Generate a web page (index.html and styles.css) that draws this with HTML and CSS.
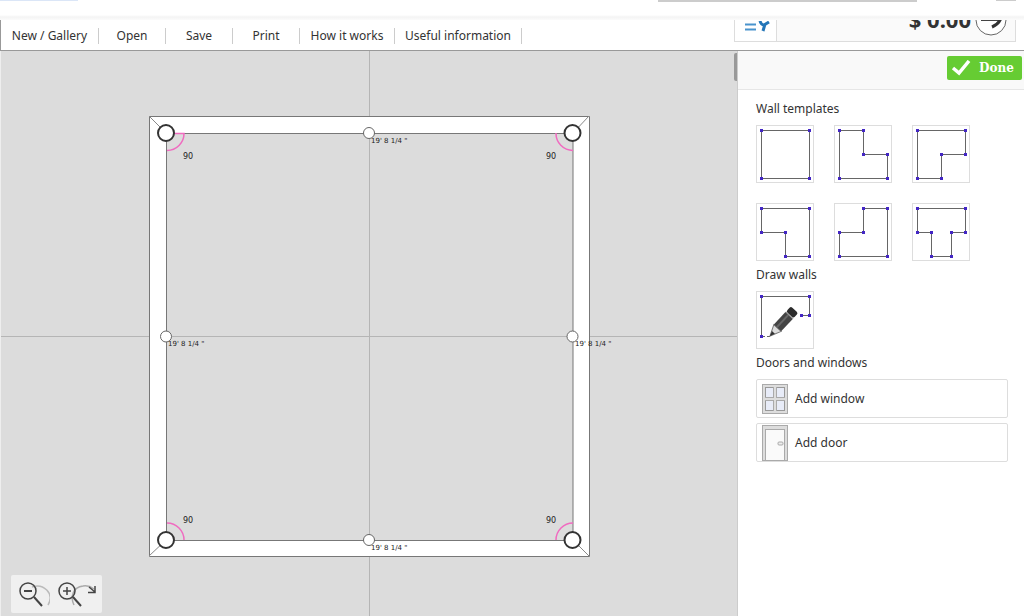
FILE: index.html
```html
<!DOCTYPE html>
<html lang="en">
<head>
<meta charset="utf-8">
<meta name="viewport" content="width=device-width, initial-scale=1">
<title>Room planner</title>
<link rel="stylesheet" href="styles.css">
</head>
<body>
<div class="top-strip"><span class="strip-tab"></span><span class="strip-line"></span><span class="strip-end"></span></div>
<header class="toolbar">
  <nav class="menu">
    <button class="menu-item wide">New / Gallery</button>
    <button class="menu-item">Open</button>
    <button class="menu-item">Save</button>
    <button class="menu-item">Print</button>
    <button class="menu-item how">How it works</button>
    <button class="menu-item info">Useful information</button>
  </nav>
  <div class="cart">
    <button class="cart-list" aria-label="Item list">
      <svg width="41" height="20" viewBox="0 0 41 20"><path d="M10 3.500H21M10 8.500H21" stroke="#4a94cd" stroke-width="2"/><path d="M25 0Q26 4 29 4L34 1M30 3L28 10" fill="none" stroke="#2476b8" stroke-width="3"/></svg>
    </button>
    <div class="price"><span>$ 0.00</span></div>
    <button class="cart-go" aria-label="Continue">
      <svg width="32" height="20" viewBox="0 0 32 20"><circle cx="16" cy="0" r="15" fill="#fff" stroke="#666"/><path d="M6 .5H25" stroke="#444"/><path d="M26-2Q24 4 17 7" fill="none" stroke="#333" stroke-width="3"/></svg>
    </button>
  </div>
</header>
<main class="workspace">
  <section class="canvas">
    <svg class="plan" width="440" height="440" viewBox="0 0 440 440">
      <path d="M220.5-400V840M-400 220.5H840" stroke="#b5b5b5"/>
      <path d="M.5.5H440.5V440.5H.5Z" fill="#fff" stroke="#777"/>
      <path d="M17.5 17.500H424V424.500H17.5Z" fill="#dcdcdc" stroke="#777"/>
      <path d="M220.500 18V424M18 220.500H424" stroke="#b5b5b5"/>
      <path d="M0 0L17 17M440 0L424 17M0 440L17 424M440 440L424 424" stroke="#888"/>
      <path d="M17 17.500H35A17 17 0 0 1 18 34.500M407 17A17 17 0 0 0 424 34.500M18 407A17 17 0 0 1 35 424M424 407A17 17 0 0 0 407 424" fill="none" stroke="#f06bc0" stroke-width="1.500"/>
      <g fill="#fff" stroke="#333" stroke-width="2"><circle cx="17" cy="17" r="8"/><circle cx="423.500" cy="17" r="8"/><circle cx="17" cy="424" r="8"/><circle cx="423.500" cy="424" r="8"/></g>
      <g fill="#fff" stroke="#666"><circle cx="220" cy="17" r="5.500"/><circle cx="17" cy="220.500" r="5.500"/><circle cx="423.500" cy="220.500" r="5.500"/><circle cx="220" cy="424" r="5.500"/></g>
      <g class="angle"><text x="34" y="43">90</text><text x="397" y="43">90</text><text x="34" y="407">90</text><text x="397" y="407">90</text></g>
      <g class="measure"><text x="222" y="27">19' 8 1/4 "</text><text x="19" y="230">19' 8 1/4 "</text><text x="426" y="230">19' 8 1/4 "</text><text x="222" y="434">19' 8 1/4 "</text></g>
    </svg>
    <span class="scroll-thumb"></span>
    <div class="zoom">
      <button aria-label="Zoom out"><svg width="39" height="38" viewBox="0 0 39 38"><path d="M21 12C32 8 44 18 37 30" fill="none" stroke="#bbb" stroke-width="1.500"/><g fill="none" stroke="#444" stroke-width="1.500"><circle cx="17" cy="16" r="8"/><path d="M23 22L31 31" stroke-width="2"/><path d="M13 16H21" stroke-width="2"/></g></svg></button>
      <button aria-label="Zoom in"><svg width="52" height="38" viewBox="0 0 52 38"><path d="M24 30C20 22 23 12 33 11Q39 10 44 14" fill="none" stroke="#aaa" stroke-width="1.500"/><g fill="none" stroke="#444" stroke-width="1.500"><circle cx="17" cy="16" r="8"/><path d="M23 22L31 31" stroke-width="2"/><path d="M13 16H21M17 12V20M39 12L45 17M38 17.500H45V11" stroke-width="1.500"/></g></svg></button>
    </div>
  </section>
  <aside class="panel">
    <div class="panel-head">
      <button class="done"><svg width="20" height="16" viewBox="0 0 20 16"><path d="M2 8L8 13L18 1" fill="none" stroke="#fff" stroke-width="3.500"/></svg>Done</button>
    </div>
    <div class="panel-body">
      <h2>Wall templates</h2>
      <div class="templates">
        <button class="tile" aria-label="Square room"><svg viewBox="0 0 56 56"><path d="M4.500 4.500H52.500V52.500H4.500Z"/></svg></button>
        <button class="tile" aria-label="Notch top right"><svg viewBox="0 0 56 56"><path d="M4.500 4.500H28.500V28.500H52.500V52.500H4.500Z"/></svg></button>
        <button class="tile" aria-label="Notch bottom right"><svg viewBox="0 0 56 56"><path d="M4.500 4.500H52.500V28.500H28.500V52.500H4.500Z"/></svg></button>
        <button class="tile" aria-label="Notch bottom left"><svg viewBox="0 0 56 56"><path d="M4.500 4.500H52.500V52.500H28.500V28.500H4.500Z"/></svg></button>
        <button class="tile" aria-label="Notch top left"><svg viewBox="0 0 56 56"><path d="M28.500 4.500H52.500V52.500H4.500V28.500H28.500Z"/></svg></button>
        <button class="tile" aria-label="T-shaped room"><svg viewBox="0 0 56 56"><path d="M4.500 4.500H52.500V28.500H38.500V52.500H18.500V28.500H4.500Z"/></svg></button>
      </div>
      <h2>Draw walls</h2>
      <button class="tile" aria-label="Draw walls"><svg viewBox="0 0 56 56"><path d="M4.500 44.500V4.500H52.500V23.500H44.500"/><path class="dash" d="M5 44.500H14"/>
        <g transform="translate(13 44) rotate(-47)"><polygon points="0,0 11,-5 11,5" fill="#ddd" stroke="#777"/><polygon points="0,0 5,-2 5,2" fill="#333"/><rect x="11" y="-5" width="17" height="10" fill="#444"/><rect x="11" y="-2" width="17" height="2" fill="#666"/><rect x="28" y="-5" width="1" height="10" fill="#888"/><rect x="29" y="-5" width="7" height="10" rx="2" fill="#2b2b2b"/></g></svg></button>
      <h2>Doors and windows</h2>
      <button class="add"><svg width="26" height="30" viewBox="0 0 26 30"><rect x=".5" y=".5" width="25" height="29" fill="#ddd" stroke="#aaa"/><rect x="3.500" y="3.500" width="19" height="23" fill="#e8ecf8" stroke="#999"/><path d="M13 3V27M3 15H23" stroke="#aaa" stroke-width="4"/><path d="M13 3V27M3 15H23" stroke="#ddd" stroke-width="2"/></svg>Add window</button>
      <button class="add"><svg width="26" height="36" viewBox="0 0 26 36"><rect x=".5" y=".5" width="25" height="35" fill="#ddd" stroke="#aaa"/><rect x="3.500" y="4.500" width="19" height="31" fill="#fafafa" stroke="#aaa"/><rect x="16" y="17" width="5" height="3" rx="1" fill="#eee" stroke="#aaa"/></svg>Add door</button>
    </div>
  </aside>
</main>
<script src="tiles.js"></script>
</body>
</html>
```
FILE: tiles.js
```js
// Puts a square handle on every corner of each wall outline.
document.querySelectorAll('.tile svg').forEach(function (svg) {
  var path = svg.querySelector('path');
  var x = 0, y = 0;
  path.getAttribute('d').replace(/([MHV])([\d.]+)(?: ([\d.]+))?/g, function (m, cmd, a, b) {
    if (cmd === 'M') { x = +a; y = +b; }
    if (cmd === 'H') x = +a;
    if (cmd === 'V') y = +a;
    var dot = document.createElementNS('http://www.w3.org/2000/svg', 'rect');
    dot.setAttribute('x', x - 1.5);
    dot.setAttribute('y', y - 1.5);
    dot.setAttribute('width', 3);
    dot.setAttribute('height', 3);
    dot.setAttribute('class', 'handle');
    svg.appendChild(dot);
  });
});
```
FILE: styles.css
```css
* { box-sizing: border-box; }
body {
  margin: 0;
  min-height: 100vh;
  display: flex;
  flex-direction: column;
  background: #fff;
  color: #333;
  font: 12px/16px "Noto Sans", sans-serif;
}
button { border: 0; padding: 0; background: none; color: inherit; font: inherit; cursor: pointer; }
svg { display: block; flex: none; }

.top-strip { height: 20px; display: flex; align-items: flex-start; background: linear-gradient(#fff 15px, #f4f4f4 17px, #fbfbfb); }
.strip-tab { width: 78px; height: 1px; background: #dbe6f7; }
.strip-line { width: 259px; height: 2px; margin-left: auto; background: #ccc; }
.strip-end { width: 20px; height: 1px; margin: 0 8px 0 79px; background: #ccc; }

.toolbar { height: 31px; display: flex; justify-content: space-between; align-items: flex-start; border-left: 1px solid #999; border-bottom: 1px solid #999; }
.menu { display: flex; padding-top: 8px; }
.menu-item { width: 67px; height: 16px; line-height: 16px; border-right: 1px solid #ccc; white-space: nowrap; }
.menu-item.wide { width: 98px; }
.menu-item.how { width: 95px; }
.menu-item.info { width: 127px; }
.cart { width: 282px; height: 22px; margin-right: 8px; display: flex; align-items: flex-start; overflow: hidden; border: 1px solid #ddd; border-top: 0; background: #fafafa; }
.cart-list { width: 42px; height: 21px; border-right: 1px solid #ddd; background: #fff; }
.price { flex: 1; height: 21px; display: flex; align-items: flex-end; justify-content: flex-end; overflow: hidden; font: bold 22px/20px "Noto Sans", sans-serif; padding: 0 4px 12px 0; }
.cart-go { margin-right: 8px; }

.workspace { flex: 1; display: flex; align-items: stretch; border-left: 1px solid #eee; }
.canvas { position: relative; flex: 1; display: flex; align-items: center; justify-content: center; padding-top: 5px; overflow: hidden; background: #dcdcdc; }
.plan { overflow: visible; }
.angle { font: 8px "DejaVu Sans", sans-serif; fill: #222; }
.measure { font: 7px "DejaVu Sans", sans-serif; fill: #222; }
.scroll-thumb { position: absolute; top: 2px; right: 0; width: 3px; height: 28px; border-radius: 2px 0 0 2px; background: #999; }
.zoom { position: absolute; left: 10px; bottom: 3px; display: flex; border-radius: 2px; background: #f0f0f0; }

.panel { width: 287px; border-left: 1px solid #ccc; background: #fff; }
.panel-head { height: 39px; padding: 5px 2px 0 0; display: flex; justify-content: flex-end; align-items: flex-start; border-bottom: 1px solid #e6e6e6; background: #f9f9f9; }
.done { height: 24px; width: 75px; display: flex; align-items: center; gap: 8px; padding-left: 4px; border-radius: 2px; background: #66cc33; color: #fff; font: bold 12px "DejaVu Serif", serif; }
.panel-body { padding: 11px 16px 0 18px; }
h2 { margin: 0 0 8px; font-size: 12px; line-height: 16px; font-weight: normal; }
.templates { display: grid; grid-template-columns: repeat(3, 58px); gap: 20px; margin-bottom: 6px; }
.tile { display: block; width: 58px; height: 58px; border: 1px solid #ddd; background: #fff; }
.tile + h2 { margin-top: 6px; }
.tile path { fill: none; stroke: #666; }
.tile .dash { stroke-dasharray: 3 2; }
.handle { fill: #4326c4; }
.add { width: 100%; max-width: 252px; height: 39px; display: flex; align-items: center; gap: 7px; margin-bottom: 5px; padding-left: 5px; border: 1px solid #ddd; border-radius: 2px; }
```
